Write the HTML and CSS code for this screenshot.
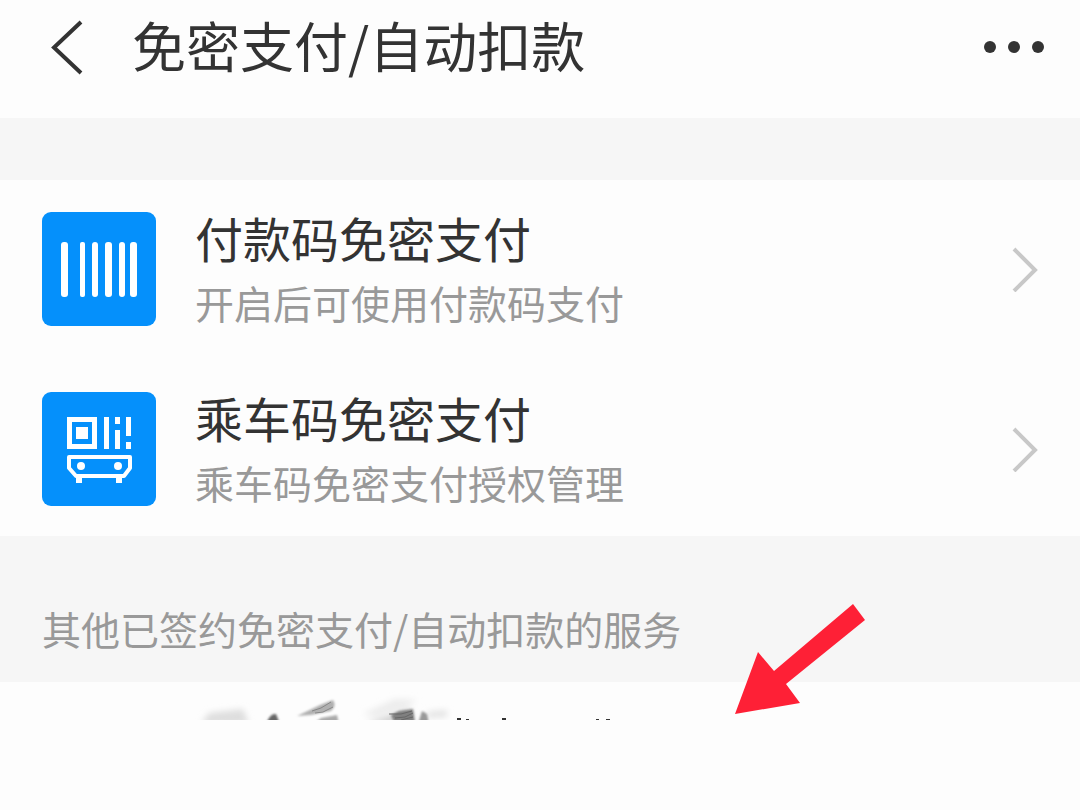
FILE: index.html
```html
<!DOCTYPE html>
<html lang="zh-CN">
<head>
    <meta charset="utf-8">
    <title>免密支付/自动扣款</title>
    <meta name="viewport" content="width=device-width,initial-scale=1.0">
    <link rel="stylesheet" href="styles.css">
</head>
<body>
    <header class="header">
        <button class="icon-btn" type="button" aria-label="返回">
            <svg width="36" height="60" viewBox="0 0 36 60">
                <path d="M33 5L6 30.500L33 56" fill="none" stroke="#333" stroke-width="4"/>
            </svg>
        </button>
        <h1 class="title">免密支付/自动扣款</h1>
        <button class="icon-btn" type="button" aria-label="更多">
            <svg width="60" height="60" viewBox="0 0 60 60" fill="#333">
                <circle cx="6" cy="30" r="6"/>
                <circle cx="30" cy="30" r="6"/>
                <circle cx="54" cy="30" r="6"/>
            </svg>
        </button>
    </header>

    <main>
        <nav class="list">
            <a class="row" href="#pay-code">
                <svg class="row-icon" viewBox="0 0 114 114">
                    <rect width="114" height="114" rx="9" fill="#0590fb"/>
                    <g fill="#fff">
                        <rect x="19" y="30" width="7" height="55" rx="3"/>
                        <rect x="38" y="30" width="5" height="55" rx="2"/>
                        <rect x="50" y="30" width="6" height="55" rx="3"/>
                        <rect x="63" y="30" width="7" height="55" rx="3"/>
                        <rect x="77" y="30" width="6" height="55" rx="3"/>
                        <rect x="88" y="30" width="7" height="55" rx="3"/>
                    </g>
                </svg>
                <div class="row-text">
                    <h2 class="row-title">付款码免密支付</h2>
                    <p class="row-desc">开启后可使用付款码支付</p>
                </div>
                <svg class="chevron" viewBox="0 0 26 46">
                    <path d="M2 3L23 24L2 45" fill="none" stroke="#c8c8c8" stroke-width="4"/>
                </svg>
            </a>
            <a class="row" href="#ride-code">
                <svg class="row-icon" viewBox="0 0 114 114">
                    <rect width="114" height="114" rx="9" fill="#0590fb"/>
                    <g fill="#fff">
                        <!-- code -->
                        <path d="M25 25H55V57H25ZM30 30V52H50V30Z" fill-rule="evenodd"/>
                        <rect x="34" y="35" width="12" height="12"/>
                        <rect x="62" y="25" width="5" height="32"/>
                        <rect x="73" y="25" width="5" height="7"/>
                        <rect x="73" y="38" width="5" height="19"/>
                        <rect x="84" y="25" width="5" height="19"/>
                        <rect x="84" y="50" width="5" height="7"/>
                        <!-- bus -->
                        <circle cx="39" cy="74" r="4"/>
                        <circle cx="76" cy="74" r="4"/>
                        <rect x="34" y="85" width="6" height="6"/>
                        <rect x="74" y="85" width="6" height="6"/>
                    </g>
                    <path d="M27 65H88V76L82 84H34L27 76Z" fill="none" stroke="#fff" stroke-width="4" stroke-linejoin="round"/>
                </svg>
                <div class="row-text">
                    <h2 class="row-title">乘车码免密支付</h2>
                    <p class="row-desc">乘车码免密支付授权管理</p>
                </div>
                <svg class="chevron" viewBox="0 0 26 46">
                    <path d="M2 3L23 24L2 45" fill="none" stroke="#c8c8c8" stroke-width="4"/>
                </svg>
            </a>
        </nav>

        <section class="signed">
            <h2 class="signed-title">其他已签约免密支付/自动扣款的服务</h2>
            <svg class="arrow" width="130" height="110" viewBox="0 0 130 110">
                <path d="M118 0L130 16L51 80L65 99L0 110L23 48L39 67Z" fill="#fe2036"/>
            </svg>
        </section>

        <!-- top edge of the next service, name brushed out -->
        <div class="signed-peek">
            <svg class="smudge" width="450" height="38" viewBox="0 0 450 38">
                <defs>
                    <filter id="soft" x="-20%" y="-50%" width="140%" height="200%">
                        <feGaussianBlur stdDeviation="3"/>
                    </filter>
                    <filter id="edge" x="-20%" y="-50%" width="140%" height="200%">
                        <feGaussianBlur stdDeviation="1"/>
                    </filter>
                </defs>
                <g filter="url(#soft)">
                    <path d="M6 42L14 31L48 27L54 42Z" fill="#dedede"/>
                    <path d="M168 32L200 17L222 18L212 25L180 35Z" fill="#ececec"/>
                    <path d="M170 42L215 27L220 42Z" fill="#cfcfcf"/>
                    <path d="M232 30L252 28V35L232 36Z" fill="#e2e2e2"/>
                </g>
                <g filter="url(#edge)">
                    <path d="M71 42Q75 31 81 32L85 42Z" fill="#666"/>
                    <path d="M102 34L125 23L138 18Q142 24 136 29L116 33Z" fill="#b0b0b0"/>
                    <path d="M118 42L126 36L142 33L144 42Z" fill="#aaa"/>
                    <path d="M196 33L204 29L218 27L220 42H200Z" fill="#808080"/>
                    <path d="M223 42L227 29L232 32L234 42Z" fill="#999"/>
                </g>
                <path d="M117 29L126 26L136 20M120 31L128 30L138 25" fill="none" stroke="#888" stroke-width="1"/>
                <path d="M194 32L206 32L217 29M200 36L210 35L218 31M206 38L218 35" fill="none" stroke="#666" stroke-width="1"/>
                <g fill="#333">
                    <rect x="262" y="36" width="4" height="2"/>
                    <rect x="271" y="37" width="3" height="1"/>
                    <rect x="307" y="36" width="4" height="2"/>
                    <rect x="401" y="37" width="3" height="1"/>
                    <rect x="411" y="37" width="4" height="1"/>
                </g>
            </svg>
        </div>
    </main>
</body>
</html>
```
FILE: styles.css
```css
body{
    margin: 0;
    background: #fdfdfd;
    color: #333;
    font-family: "Noto Sans CJK SC", sans-serif;
}

h1, h2, p{
    margin: 0;
    font-weight: 400;
}

svg{
    display: block;
}

.header{
    display: flex;
    align-items: center;
    padding: 8px 36px 32px 48px;
}

.icon-btn{
    padding: 0;
    border: 0;
    background: none;
}

.title{
    flex: 1;
    margin: 0 0 4px 48px;
    font-size: 54px;
    line-height: 74px;
}

.list{
    border-top: 62px solid #f6f6f6;
}

.row{
    display: flex;
    align-items: center;
    padding: 24px 42px 26px;
    color: #333;
    text-decoration: none;
}

.row:last-child{
    padding-bottom: 22px;
}

.row-icon{
    width: 114px;
    height: 114px;
}

.row-text{
    flex: 1;
    margin-left: 39px;
}

.row-title{
    font-size: 48px;
    line-height: 66px;
}

.row-desc{
    color: #999;
    font-size: 39px;
    line-height: 64px;
}

.chevron{
    width: 26px;
    height: 46px;
}

.signed{
    position: relative;
    padding: 62px 42px 24px;
    background: #f6f6f6;
}

.signed-title{
    color: #999;
    font-size: 39px;
    line-height: 60px;
}

.arrow{
    position: absolute;
    left: 735px;
    top: 68px;
}

.signed-peek{
    padding-left: 195px;
}
```
